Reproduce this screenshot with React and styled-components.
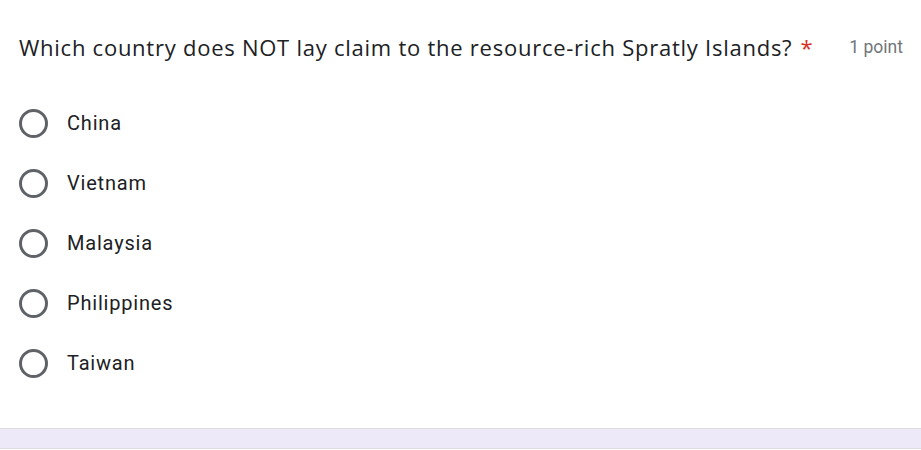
import React from 'react';
import styled, { createGlobalStyle } from 'styled-components';

const GlobalStyle = createGlobalStyle`
  html, body {
    margin: 0;
    padding: 0;
    background: #ffffff;
  }
  body {
    font-family: Roboto, Arial, sans-serif;
  }
`;

const Page = styled.div`
  width: 921px;
  height: 450px;
  display: flex;
  flex-direction: column;
  background: #ffffff;
  overflow: hidden;
`;

const Card = styled.div`
  height: 429px;
  box-sizing: border-box;
  padding: 26px 18px 0 19px;
  border-bottom: 1px solid #dadce0;
  background: #ffffff;
`;

const Header = styled.div`
  display: flex;
  align-items: flex-start;
  justify-content: space-between;
`;

const Title = styled.div`
  font-family: 'Open Sans', Roboto, sans-serif;
  font-size: 22px;
  line-height: 43px;
  color: #202124;
  letter-spacing: 0.75px;
  white-space: nowrap;
`;

const Required = styled.span`
  color: #d93025;
  margin-left: 8px;
`;

const Points = styled.div`
  font-family: Roboto, Arial, sans-serif;
  font-size: 17.5px;
  line-height: 42px;
  color: #70757a;
  white-space: nowrap;
`;

const Options = styled.div`
  display: flex;
  flex-direction: column;
  margin-top: 24px;
`;

const Option = styled.label`
  display: flex;
  align-items: center;
  gap: 19px;
  height: 60px;
`;

const Radio = styled.span`
  width: 29px;
  height: 29px;
  box-sizing: border-box;
  border: 3px solid #5f6368;
  border-radius: 50%;
  flex: none;
`;

const OptionText = styled.span`
  font-family: Roboto, Arial, sans-serif;
  font-size: 20px;
  letter-spacing: 0.8px;
  color: #202124;
`;

const Footer = styled.div`
  height: 19px;
  background: #ede9f8;
  border-bottom: 1px solid #dadce0;
`;

const choices = ['China', 'Vietnam', 'Malaysia', 'Philippines', 'Taiwan'];

export default function App() {
  return (
    <>
      <GlobalStyle />
      <Page>
        <Card>
          <Header>
            <Title>
              Which country does NOT lay claim to the resource-rich Spratly Islands?
              <Required>*</Required>
            </Title>
            <Points>1 point</Points>
          </Header>
          <Options>
            {choices.map(c => (
              <Option key={c}>
                <Radio />
                <OptionText>{c}</OptionText>
              </Option>
            ))}
          </Options>
        </Card>
        <Footer />
      </Page>
    </>
  );
}
